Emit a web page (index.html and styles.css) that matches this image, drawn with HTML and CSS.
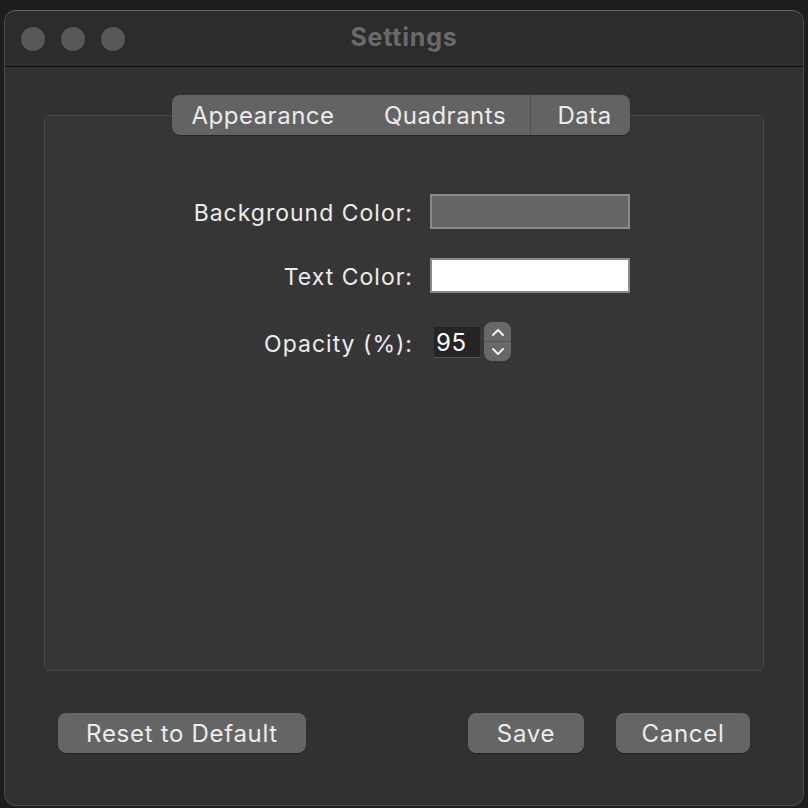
FILE: index.html
```html
<!DOCTYPE html>
<html lang="en">
<head>
    <meta charset="UTF-8">
    <title>Settings</title>
    <link rel="stylesheet" href="styles.css">
</head>
<body>
    <div class="window">
        <div class="titlebar">
            <div class="lights">
                <span class="light"></span>
                <span class="light"></span>
                <span class="light"></span>
            </div>
            <div class="title">Settings</div>
        </div>

        <div class="content">
            <div class="group">
                <div class="tabs">
                    <div class="tab tab-first">Appearance</div>
                    <div class="tab tab-mid">Quadrants</div>
                    <div class="tab tab-last">Data</div>
                </div>

                <div class="form">
                    <label>Background Color:</label>
                    <div class="swatch swatch-bg"></div>

                    <label>Text Color:</label>
                    <div class="swatch swatch-text"></div>

                    <label class="label-opacity">Opacity (%):</label>
                    <div class="spin">
                        <div class="spin-input">95</div>
                        <div class="stepper">
                            <div class="step">
                                <svg width="16" height="10" viewBox="0 0 16 10"><path d="M3 8 L8 3 L13 8" fill="none" stroke="#f0f0f0" stroke-width="2" stroke-linecap="round" stroke-linejoin="round"/></svg>
                            </div>
                            <div class="step step-down">
                                <svg width="16" height="10" viewBox="0 0 16 10"><path d="M3 2 L8 7 L13 2" fill="none" stroke="#f0f0f0" stroke-width="2" stroke-linecap="round" stroke-linejoin="round"/></svg>
                            </div>
                        </div>
                    </div>
                </div>
            </div>

            <div class="actions">
                <button class="btn btn-reset">Reset to Default</button>
                <div class="actions-right">
                    <button class="btn btn-save">Save</button>
                    <button class="btn btn-cancel">Cancel</button>
                </div>
            </div>
        </div>
    </div>
</body>
</html>
```

FILE: styles.css
```css
:root {
    --color-page: #1d1d1d;
    --color-title: #2c2c2c;
    --color-content: #313131;
    --color-group: #363636;
    --color-control: #656565;
    --color-text: #ececec;
}

* {
    box-sizing: border-box;
}

body {
    margin: 0;
    padding: 10px 4px 0 4px;
    background-color: var(--color-page);
    font-family: Inter, 'Open Sans', sans-serif;
    color: var(--color-text);
    height: 808px;
    overflow: hidden;
}

.window {
    width: 800px;
    height: 796px;
    border-radius: 12px;
    border: 1px solid #4c4c4c;
    border-top-color: #6a6a6a;
    overflow: hidden;
    background-color: var(--color-content);
    display: flex;
    flex-direction: column;
}

.titlebar {
    height: 56px;
    background-color: var(--color-title);
    border-bottom: 1px solid #111;
    display: flex;
    align-items: center;
    position: relative;
    flex-shrink: 0;
}

.lights {
    display: flex;
    gap: 16px;
    padding-left: 16px;
}

.light {
    width: 24px;
    height: 24px;
    border-radius: 50%;
    background-color: #585858;
}

.title {
    position: absolute;
    left: 0;
    right: 0;
    top: 11px;
    text-align: center;
    font-weight: 700;
    font-size: 25px;
    color: #6a6a6a;
    letter-spacing: 0.8px;
}

.content {
    flex: 1;
    padding: 48px 39px 0 39px;
}

.group {
    height: 556px;
    border: 1px solid #474747;
    border-radius: 6px;
    background-color: var(--color-group);
    position: relative;
}

.tabs {
    position: absolute;
    top: -21px;
    left: 127px;
    width: 458px;
    height: 40px;
    border-radius: 8px;
    background-color: #636363;
    display: flex;
    align-items: center;
    font-size: 24px;
    letter-spacing: 0.5px;
    color: #ebebeb;
    box-shadow: 0 1px 1px rgba(0,0,0,0.3);
}

.tab {
    height: 100%;
    display: flex;
    align-items: center;
    justify-content: center;
}

.tab-first {
    width: 188px;
    padding-right: 6px;
}

.tab-mid {
    width: 170px;
}

.tab-last {
    flex: 1;
    border-left: 1px solid #4f4f4f;
    padding-left: 8px;
}

.form {
    display: grid;
    grid-template-columns: 368px 200px;
    column-gap: 17px;
    row-gap: 29px;
    align-items: center;
    padding-top: 78px;
    font-size: 23px;
    letter-spacing: 1px;
}

.form label {
    text-align: right;
    padding-top: 2px;
}

.form .label-opacity {
    padding-top: 4px;
}

.swatch {
    height: 35px;
    border: 2px solid #8a8a8a;
}

.swatch-bg {
    background-color: #666666;
}

.swatch-text {
    background-color: #ffffff;
}

.spin {
    display: flex;
    align-items: center;
    gap: 4px;
    margin-left: 4px;
}

.spin-input {
    width: 46px;
    height: 31px;
    margin-top: 2px;
    background-color: #242424;
    border-bottom: 1px solid #555;
    color: #fff;
    font-size: 24px;
    letter-spacing: 0.5px;
    line-height: 32px;
    padding-left: 2px;
}

.stepper {
    width: 27px;
    height: 39px;
    border-radius: 8px;
    background-color: #686868;
    display: flex;
    flex-direction: column;
    overflow: hidden;
}

.step {
    flex: 1;
    display: flex;
    align-items: center;
    justify-content: center;
}

.step-down {
    border-top: 1px solid #555;
}

.actions {
    display: flex;
    justify-content: space-between;
    padding: 42px 14px 0 14px;
}

.actions-right {
    display: flex;
    gap: 32px;
}

.btn {
    height: 40px;
    border: none;
    border-radius: 8px;
    background-color: var(--color-control);
    color: var(--color-text);
    font-family: Inter, 'Open Sans', sans-serif;
    font-size: 24px;
    letter-spacing: 0.7px;
    box-shadow: 0 1px 1px rgba(0,0,0,0.35);
    padding: 0;
}

.btn-reset {
    width: 248px;
}

.btn-save {
    width: 116px;
}

.btn-cancel {
    width: 134px;
}
```
